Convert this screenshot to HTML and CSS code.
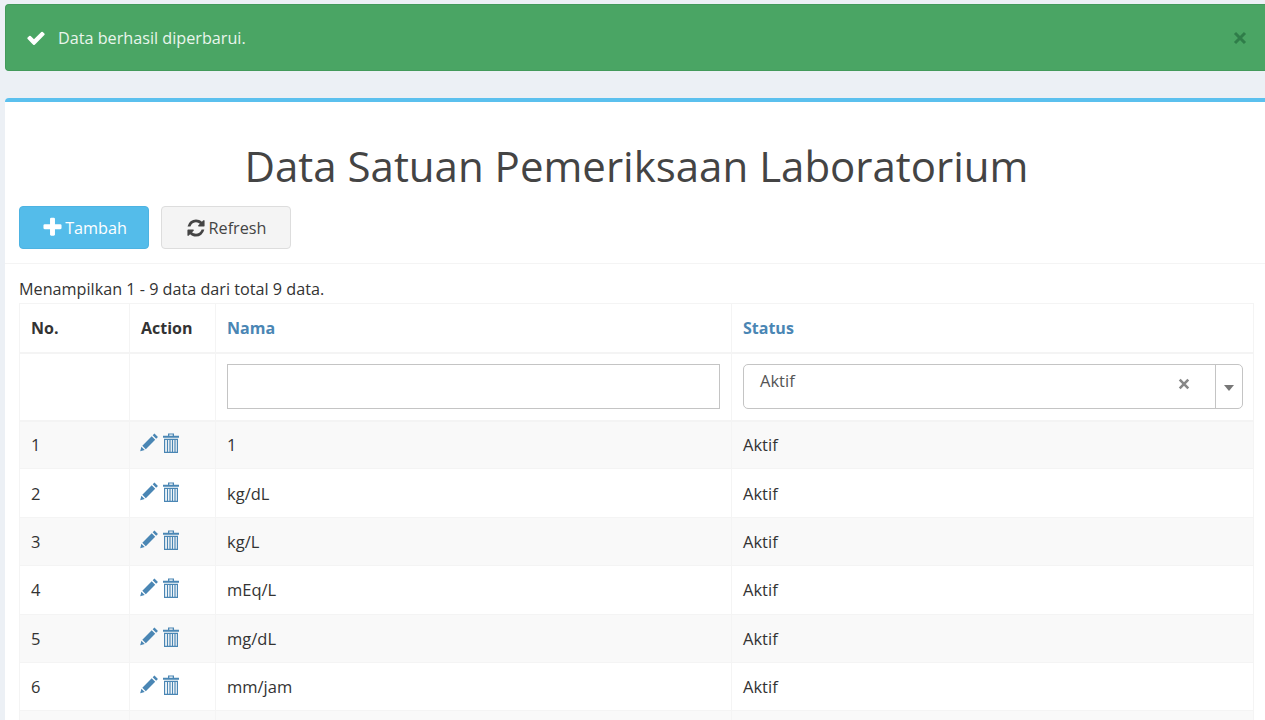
FILE: index.html
```html
<!DOCTYPE html>
<html lang="id">
<head>
  <meta charset="UTF-8" />
  <meta name="viewport" content="width=device-width, initial-scale=1.0" />
  <title>Data Satuan Pemeriksaan Laboratorium</title>
  <link rel="stylesheet" href="styles.css">
</head>
<body>
  <div class="alert">
    <svg class="alert-icon" viewBox="0 0 1792 1792"><path d="M1671 566q0 40-28 68l-724 724-136 136q-28 28-68 28t-68-28l-136-136-362-362q-28-28-28-68t28-68l136-136q28-28 68-28t68 28l294 295 656-657q28-28 68-28t68 28l136 136q28 28 28 68z"/></svg>
    <span class="alert-text">Data berhasil diperbarui.</span>
    <svg class="alert-close" viewBox="0 0 14 14"><path d="M2 2l10 10M12 2L2 12"/></svg>
  </div>

  <div class="box">
    <h1>Data Satuan Pemeriksaan Laboratorium</h1>
    <div class="toolbar">
      <button class="btn btn-info" type="button">
        <svg class="btn-icon" viewBox="0 0 1792 1792"><path d="M1600 736v192q0 40-28 68t-68 28h-416v416q0 40-28 68t-68 28h-192q-40 0-68-28t-28-68v-416h-416q-40 0-68-28t-28-68v-192q0-40 28-68t68-28h416v-416q0-40 28-68t68-28h192q40 0 68 28t28 68v416h416q40 0 68 28t28 68z"/></svg>
        Tambah
      </button>
      <button class="btn btn-default" type="button">
        <svg class="btn-icon" viewBox="0 0 1792 1792"><path d="M1639 1056q0 5-1 7-64 268-268 434.500t-478 166.500q-146 0-282.500-55t-243.500-157l-129 129q-19 19-45 19t-45-19-19-45v-448q0-26 19-45t45-19h448q26 0 45 19t19 45-19 45l-137 137q71 66 161 102t187 36q134 0 250-65t186-179q11-17 53-117 8-23 30-23h192q13 0 22.500 9.500t9.500 22.500zm25-800v448q0 26-19 45t-45 19h-448q-26 0-45-19t-19-45 19-45l138-138q-148-137-349-137-134 0-250 65t-186 179q-11 17-53 117-8 23-30 23h-199q-13 0-22.500-9.500t-9.500-22.500v-7q65-268 270-434.500t480-166.500q146 0 284 55.500t245 156.500l130-129q19-19 45-19t45 19 19 45z"/></svg>
        Refresh
      </button>
    </div>

    <div class="box-body">
      <p class="summary">Menampilkan 1 - 9 data dari total 9 data.</p>
      <table class="grid">
        <colgroup>
          <col class="col-no"><col class="col-action"><col class="col-nama"><col>
        </colgroup>
        <thead>
          <tr class="head-row">
            <th>No.</th>
            <th>Action</th>
            <th><a href="#">Nama</a></th>
            <th><a href="#">Status</a></th>
          </tr>
          <tr class="filter-row">
            <td></td>
            <td></td>
            <td><input class="field" type="text"></td>
            <td>
              <div class="select">
                <span class="select-value">Aktif</span>
                <svg class="select-clear" viewBox="0 0 14 14"><path d="M2 2l10 10M12 2L2 12"/></svg>
                <span class="select-arrow"><i></i></span>
              </div>
            </td>
          </tr>
        </thead>
        <tbody id="rows"></tbody>
      </table>
    </div>
  </div>

  <script>
    var units = ['1', 'kg/dL', 'kg/L', 'mEq/L', 'mg/dL', 'mm/jam'];
    var actions =
      '<svg class="act" width="19" height="19" viewBox="0.5 1 18 18"><path d="M14.200 1.500l3.300 3.300-1.700 1.700-3.300-3.300zM11.600 4.100l3.300 3.300-8.900 8.900-3.300-3.300zM1.800 14l3.200 3.200-4.300 1.100z"/></svg>' +
      '<svg class="act" width="18" height="20" viewBox="0 0 18 20"><path d="M6 .5h6v2.300h5v2H1v-2h5zM7.300 1.600v1.200h3.400V1.600zM2 5.800h14V20H2zM3.200 7v11.800h1.700V7zM6.100 7v11.800h1.300V7zM8.600 7v11.800h1.300V7zM11.100 7v11.800h1.300V7zM13.600 7v11.800h1.200V7z" fill-rule="evenodd"/></svg>';
    var html = '';
    units.forEach(function (u, i) {
      html += '<tr><td>' + (i + 1) + '</td><td class="actions">' + actions + '</td><td>' + u + '</td><td>Aktif</td></tr>';
    });
    // the next row only shows as a strip at the bottom of the window
    html += '<tr><td></td><td></td><td></td><td></td></tr>';
    document.getElementById('rows').innerHTML = html;
  </script>
</body>
</html>
```

FILE: styles.css
```css
html, body {
  height: 720px;
  overflow: hidden;
}
body {
  margin: 0;
  padding: 4px 0 0 5px;
  box-sizing: border-box;
  background: #ecf0f5;
  color: #333;
  font-family: "Open Sans", sans-serif;
  font-size: 16.2px;
}
.alert {
  display: flex;
  align-items: center;
  height: 67px;
  box-sizing: border-box;
  padding: 0 18px 0 20px;
  background: #4aa564;
  border: 1px solid #439a5b;
  border-right: 0;
  border-radius: 4px 0 0 4px;
  color: #e9f5ec;
}
.alert-icon {
  width: 20px;
  height: 20px;
  fill: #fff;
}
.alert-text {
  margin-left: 12px;
  flex: 1;
}
.alert-close {
  width: 14px;
  height: 14px;
  fill: none;
  stroke: #2f7d49;
  stroke-width: 3;
}
.box {
  margin-top: 27px;
  background: #fff;
  border-top: 4px solid #5bc0ee;
  border-radius: 4px 0 0 0;
}
h1 {
  margin: 0;
  padding: 36px 11px 0 14px;
  height: 68px;
  text-align: center;
  font-size: 42px;
  font-weight: 400;
  line-height: 56px;
  color: #444;
}
.toolbar {
  display: flex;
  gap: 12px;
  padding: 0 0 14px 14px;
  border-bottom: 1px solid #f4f4f4;
}
.btn {
  display: flex;
  align-items: center;
  justify-content: center;
  gap: 3px;
  width: 130px;
  height: 43px;
  border-radius: 4px;
  border: 1px solid #ddd;
  font: inherit;
  padding: 0;
}
.btn-info {
  gap: 1px;
  background: #54bcea;
  border-color: #4db3e2;
  color: #fff;
}
.btn-default {
  background: #f4f4f4;
  color: #444;
}
.btn-icon {
  width: 20px;
  height: 20px;
  fill: currentColor;
}
.btn-info .btn-icon {
  width: 23px;
  height: 23px;
}
.box-body {
  padding: 0 11px 0 14px;
}
.summary {
  margin: 14px 0 2px;
  line-height: 23px;
}
.grid {
  width: 100%;
  table-layout: fixed;
  border-collapse: collapse;
  border: 1px solid #f4f4f4;
  font-size: 16.5px;
}
.col-no { width: 110px; }
.col-action { width: 86px; }
.col-nama { width: 516px; }
.grid th, .grid td {
  border: 1px solid #f4f4f4;
  padding: 0 11px;
  height: 48.4px;
  box-sizing: border-box;
  text-align: left;
}
.grid th {
  border-bottom-width: 2px;
  height: 49px;
  font-size: 16px;
  font-weight: 700;
}
.grid th a {
  color: #4a86b4;
  text-decoration: none;
}
.filter-row td {
  height: 68px;
  border-bottom-width: 2px;
}
.grid .filter-row td:last-child {
  padding-right: 10px;
}
.field {
  display: block;
  width: 100%;
  height: 45px;
  box-sizing: border-box;
  border: 1px solid #c4c4c4;
  background: #fff;
}
.select {
  display: flex;
  height: 45px;
  box-sizing: border-box;
  border: 1px solid #c4c4c4;
  border-radius: 5px;
}
.select-value {
  flex: 1;
  padding: 4px 0 0 16px;
  color: #555;
}
.select-clear {
  width: 12px;
  height: 12px;
  margin: 13px 25px 0 0;
  fill: none;
  stroke: #888;
  stroke-width: 3;
}
.select-arrow {
  display: flex;
  align-items: center;
  justify-content: center;
  width: 26px;
  border-left: 1px solid #c4c4c4;
}
.select-arrow i {
  width: 0;
  height: 0;
  margin-top: 3px;
  border: 5px solid transparent;
  border-top: 6px solid #777;
  border-bottom: 0;
}
.grid tbody tr:nth-child(odd) {
  background: #f9f9f9;
}
.actions {
  white-space: nowrap;
}
.act {
  fill: #4a86b4;
  vertical-align: top;
  margin: 0 4px 0 -1px;
}
```
